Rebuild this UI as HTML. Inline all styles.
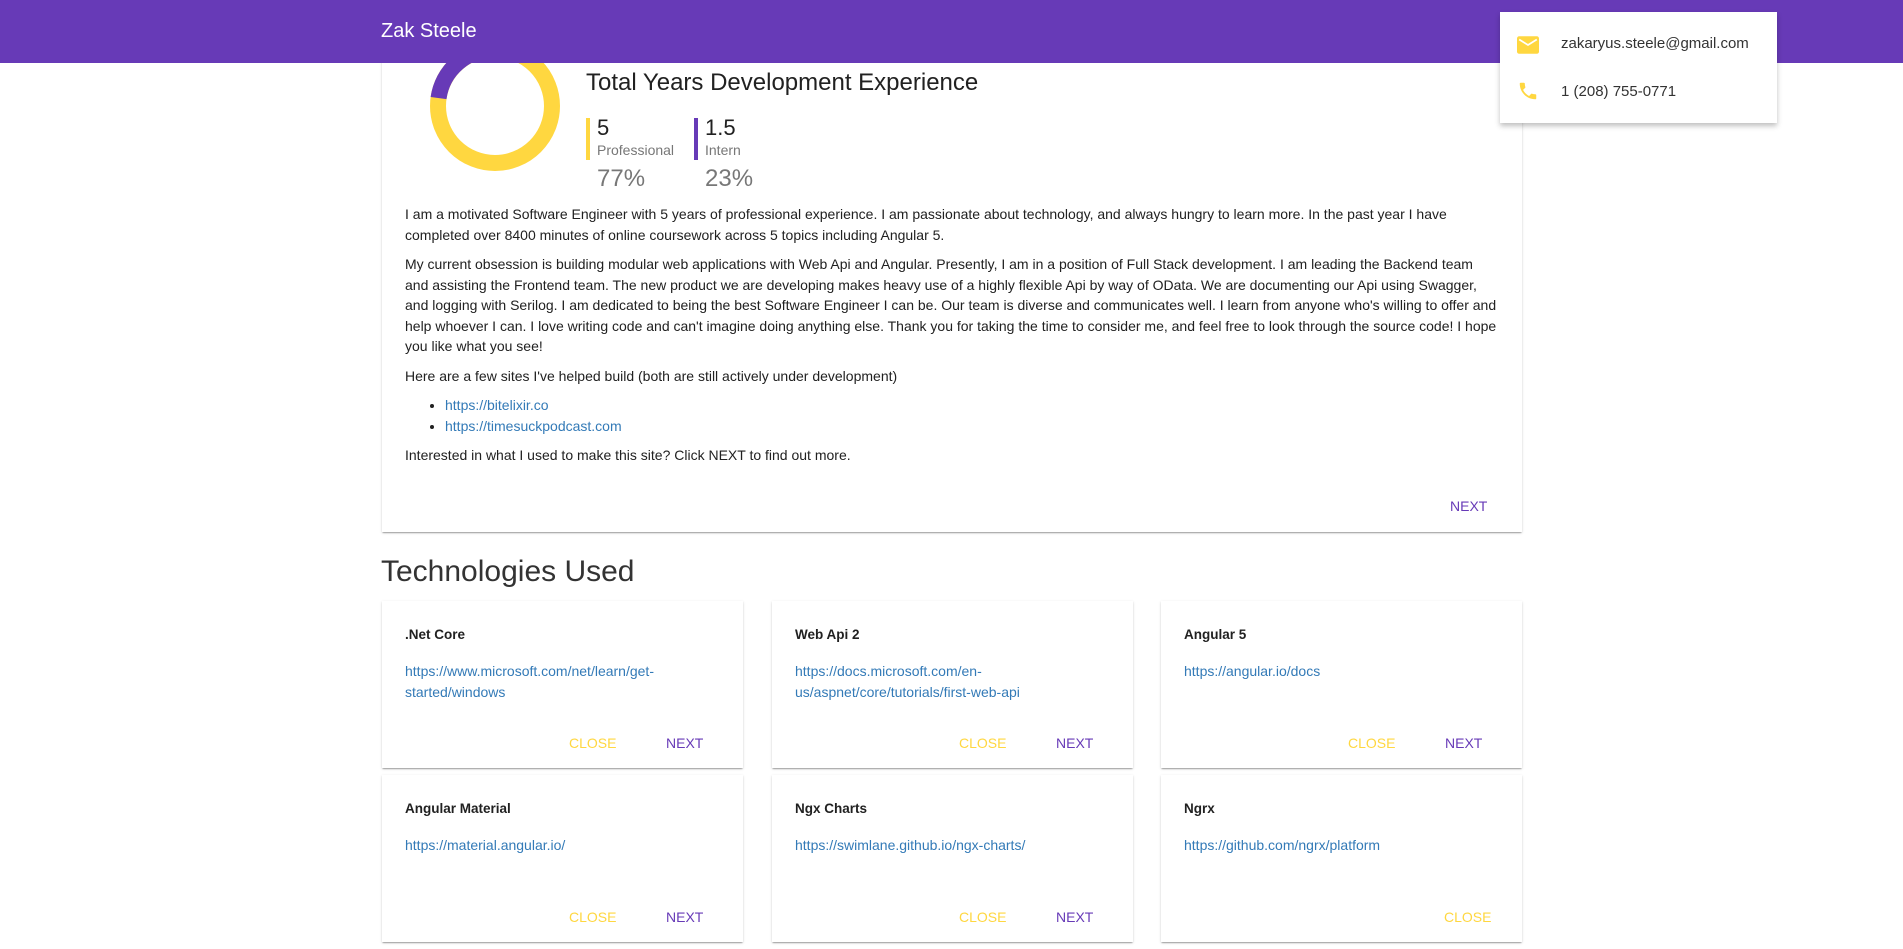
<!DOCTYPE html>
<html><head><meta charset="utf-8"><style>
*{box-sizing:border-box}
body{margin:0;width:1903px;height:949px;overflow:hidden;background:#fff;font-family:"Liberation Sans",Arial,sans-serif;color:#212121;position:relative}
.hdr{position:absolute;left:0;top:0;width:1903px;height:63px;background:#673ab7;z-index:5}
.hdr span{position:absolute;left:381px;top:20px;color:#fff;font-size:20px}
.card{position:absolute;background:#fff;box-shadow:0 2px 1px -1px rgba(0,0,0,.2),0 1px 1px 0 rgba(0,0,0,.14),0 1px 3px 0 rgba(0,0,0,.12)}
.main{left:382px;top:20px;width:1140px;height:512px}
.txt{position:absolute;left:23px;font-size:14px;line-height:20.5px;width:1095px}
.txt p{margin:0 0 9px}
a{color:#337ab7;text-decoration:none}
ul{margin:0 0 9px;padding-left:40px}
.btn{position:absolute;font-size:14px}
.y{color:#ffd740}.p{color:#673ab7}
.tc{width:361px;height:167px}
.tc h4{position:absolute;left:23px;top:26px;margin:0;font-size:13.5px;font-weight:bold}
.tc .l{position:absolute;left:23px;top:60px;font-size:14px;line-height:20.5px;width:300px}
.contact{left:1500px;top:12px;width:277px;height:111px;z-index:10;box-shadow:0 3px 5px rgba(0,0,0,.25)}
.contact div{position:absolute;left:61px;font-size:15px;color:#333}
</style></head><body>
<div class="hdr"><span>Zak Steele</span></div>

<div class="card main">
<svg style="position:absolute;left:48px;top:21px" width="130" height="130" viewBox="0 0 130 130">
<circle cx="65" cy="65" r="57" fill="none" stroke="#ffd740" stroke-width="16"/>
<circle cx="65" cy="65" r="57" fill="none" stroke="#673ab7" stroke-width="16" stroke-dasharray="82 400" transform="rotate(-172 65 65)"/>
</svg>
<div style="position:absolute;left:204px;top:49px;font-size:24px">Total Years Development Experience</div>
<div style="position:absolute;left:204px;top:98px;width:4px;height:42px;background:#ffd740"></div>
<div style="position:absolute;left:215px;top:95px;font-size:22px">5</div>
<div style="position:absolute;left:215px;top:122px;font-size:14px;color:#777">Professional</div>
<div style="position:absolute;left:215px;top:145px;font-size:24px;color:#777">77%</div>
<div style="position:absolute;left:312px;top:98px;width:4px;height:42px;background:#673ab7"></div>
<div style="position:absolute;left:323px;top:95px;font-size:22px">1.5</div>
<div style="position:absolute;left:323px;top:122px;font-size:14px;color:#777">Intern</div>
<div style="position:absolute;left:323px;top:145px;font-size:24px;color:#777">23%</div>
<div class="txt" style="top:184px">
<p>I am a motivated Software Engineer with 5 years of professional experience. I am passionate about technology, and always hungry to learn more. In the past year I have completed over 8400 minutes of online coursework across 5 topics including Angular 5.</p>
<p>My current obsession is building modular web applications with Web Api and Angular. Presently, I am in a position of Full Stack development. I am leading the Backend team and assisting the Frontend team. The new product we are developing makes heavy use of a highly flexible Api by way of OData. We are documenting our Api using Swagger, and logging with Serilog. I am dedicated to being the best Software Engineer I can be. Our team is diverse and communicates well. I learn from anyone who's willing to offer and help whoever I can. I love writing code and can't imagine doing anything else. Thank you for taking the time to consider me, and feel free to look through the source code! I hope you like what you see!</p>
<p>Here are a few sites I've helped build (both are still actively under development)</p>
<ul><li><a>https://bitelixir.co</a></li><li><a>https://timesuckpodcast.com</a></li></ul>
<p>Interested in what I used to make this site? Click NEXT to find out more.</p>
</div>
<div class="btn p" style="left:1068px;top:478px">NEXT</div>
</div>

<div style="position:absolute;left:381px;top:555px;font-size:30px;color:#333">Technologies Used</div>

<div class="card tc" style="left:382px;top:601px"><h4>.Net Core</h4><div class="l"><a>https://www.microsoft.com/net/learn/get-started/windows</a></div><div class="btn y" style="left:187px;top:134px">CLOSE</div><div class="btn p" style="left:284px;top:134px">NEXT</div></div>
<div class="card tc" style="left:772px;top:601px"><h4>Web Api 2</h4><div class="l"><a>https://docs.microsoft.com/en-us/aspnet/core/tutorials/first-web-api</a></div><div class="btn y" style="left:187px;top:134px">CLOSE</div><div class="btn p" style="left:284px;top:134px">NEXT</div></div>
<div class="card tc" style="left:1161px;top:601px"><h4>Angular 5</h4><div class="l"><a>https://angular.io/docs</a></div><div class="btn y" style="left:187px;top:134px">CLOSE</div><div class="btn p" style="left:284px;top:134px">NEXT</div></div>
<div class="card tc" style="left:382px;top:775px"><h4>Angular Material</h4><div class="l"><a>https://material.angular.io/</a></div><div class="btn y" style="left:187px;top:134px">CLOSE</div><div class="btn p" style="left:284px;top:134px">NEXT</div></div>
<div class="card tc" style="left:772px;top:775px"><h4>Ngx Charts</h4><div class="l"><a>https://swimlane.github.io/ngx-charts/</a></div><div class="btn y" style="left:187px;top:134px">CLOSE</div><div class="btn p" style="left:284px;top:134px">NEXT</div></div>
<div class="card tc" style="left:1161px;top:775px"><h4>Ngrx</h4><div class="l"><a>https://github.com/ngrx/platform</a></div><div class="btn y" style="left:283px;top:134px">CLOSE</div></div>

<div class="card contact">
<svg style="position:absolute;left:17px;top:24px" width="22" height="18" viewBox="0 0 20 16"><rect x="0" y="0" width="20" height="16" rx="2" fill="#ffd740"/><path d="M2 3 L10 8 L18 3" fill="none" stroke="#fff" stroke-width="1.6"/></svg>
<div style="top:23px">zakaryus.steele@gmail.com</div>
<svg style="position:absolute;left:17px;top:68px" width="22" height="22" viewBox="0 0 24 24"><path fill="#ffd740" d="M6.6 10.8c1.4 2.8 3.8 5.1 6.6 6.6l2.2-2.2c.3-.3.7-.4 1-.2 1.1.4 2.3.6 3.6.6.6 0 1 .4 1 1V20c0 .6-.4 1-1 1C10.6 21 3 13.4 3 4c0-.6.4-1 1-1h3.5c.6 0 1 .4 1 1 0 1.3.2 2.5.6 3.6.1.3 0 .7-.2 1L6.6 10.8z"/></svg>
<div style="top:71px">1 (208) 755-0771</div>
</div>
</body></html>
